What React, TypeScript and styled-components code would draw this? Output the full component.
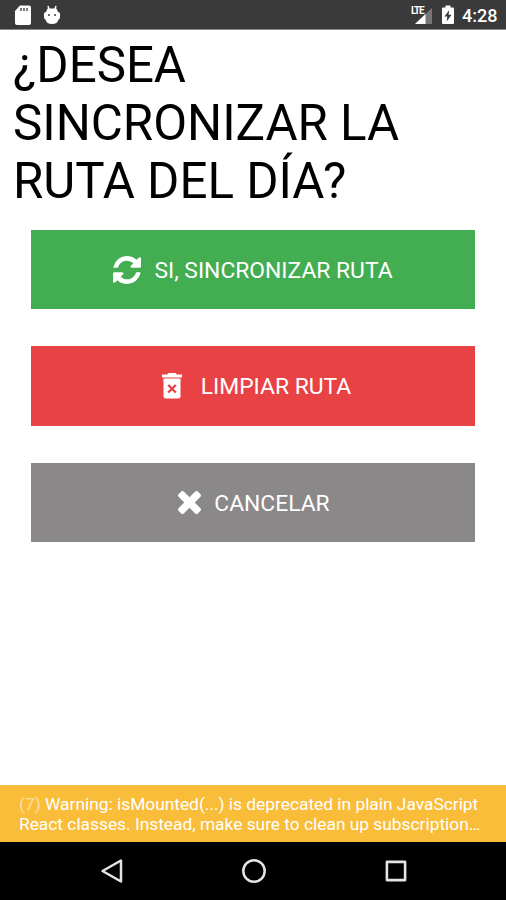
import React from "react";
import styled, { createGlobalStyle } from "styled-components";

const GlobalStyle = createGlobalStyle`
  * { box-sizing: border-box; }
  body { margin: 0; background: #fff; font-family: Roboto, "Liberation Sans", sans-serif; }
`;

const Screen = styled.div`
  display: flex;
  flex-direction: column;
  width: 506px;
  height: 900px;
  overflow: hidden;
  background: #fff;
`;

const StatusBar = styled.header`
  display: flex;
  align-items: center;
  height: 30px;
  padding: 0 9px 0 14px;
  background: #3a3a3a;
  border-bottom: 1px solid #8a8a8a;
  color: #fff;
`;

const StatusGroup = styled.div<{ $end?: boolean }>`
  display: flex;
  align-items: center;
  gap: ${(p) => (p.$end ? 9 : 11)}px;
  margin-left: ${(p) => (p.$end ? "auto" : "0")};
`;

const Clock = styled.time`
  width: 35px;
  margin-left: -1px;
  padding-top: 3px;
  font-size: 18px;
  line-height: 24px;
  font-weight: 500;
  white-space: nowrap;
`;

const Icon = styled.svg`
  display: block;
  flex: none;
`;

const Content = styled.main`
  flex: 1;
`;

const Title = styled.h1`
  margin: 0;
  padding: 7.4px 13px 0;
  font-size: 49.25px;
  line-height: 57.7px;
  font-weight: 400;
  color: #000;
  white-space: nowrap;
`;

const Actions = styled.div`
  display: flex;
  flex-direction: column;
  gap: 37px;
  padding: 19px 31px 0;
`;

const ActionButton = styled.button<{ $color: string; $gap: number; $shift: number }>`
  display: flex;
  align-items: center;
  justify-content: center;
  gap: ${(p) => p.$gap}px;
  height: 79.5px;
  padding: 1px 0 0 ${(p) => p.$shift}px;
  border: 0;
  background: ${(p) => p.$color};
  color: #fff;
  font-family: inherit;
  font-size: 22.85px;
  line-height: 28px;
  white-space: nowrap;
`;

const ButtonLabel = styled.span`
  padding-top: 2px;
`;

const Warning = styled.div`
  height: 57px;
  padding: 10px 19px 0;
  background: #fabd3a;
  color: #fff;
  font-size: 17.33px;
  line-height: 19.5px;
  white-space: nowrap;
`;

const Count = styled.span`
  opacity: 0.5;
`;

const NavBar = styled.nav`
  display: grid;
  grid-template-columns: 142px 142px 142px;
  justify-content: center;
  align-items: center;
  justify-items: center;
  height: 58px;
  padding-left: 1px;
  background: #000;
`;

const SdCard = () => (
  <Icon width="18" height="20" viewBox="0 0 18 20" fill="#fff">
    <path d="M6 0.5H15Q17 0.5 17 2.5V18Q17 20 15 20H3Q1 20 1 18V6Z" />
    <path d="M7 3V6M10 3V6M13 3V6" stroke="#3a3a3a" strokeWidth="1.3" />
  </Icon>
);

const Robot = () => (
  <Icon width="18" height="20" viewBox="0 0 18 20" fill="#fff">
    <path d="M5 1L6 4M13 1L12 4" stroke="#fff" strokeWidth="1.5" />
    <path d="M4.5 3.5H13.5L15 7Q17 7 17 9V12Q17 14 15.5 14.5Q14.5 19 9 19Q3.5 19 2.5 14.5Q1 14 1 12V9Q1 7 3 7Z" />
    <circle cx="6" cy="10" r="1" fill="#3a3a3a" />
    <circle cx="12" cy="10" r="1" fill="#3a3a3a" />
  </Icon>
);

const SignalBox = styled.div`
  position: relative;
  width: 22px;
  height: 18px;
`;

const NetworkLabel = styled.span`
  position: absolute;
  left: 0;
  top: 0;
  font-size: 10px;
  line-height: 10px;
  font-weight: 700;
  letter-spacing: -1.2px;
`;

const Signal = () => (
  <SignalBox>
    <Icon width="22" height="18" viewBox="0 0 22 18">
      <path d="M4 18L21 2V18Z" fill="#777" />
      <path d="M4 18L14.5 8V18Z" fill="#fff" />
    </Icon>
    <NetworkLabel>LTE</NetworkLabel>
  </SignalBox>
);

const Battery = () => (
  <Icon width="12" height="19" viewBox="0 0 12 19">
    <path d="M3.5 0.5H8.5V2.5H11Q12 2.5 12 3.5V18Q12 19 11 19H1Q0 19 0 18V3.5Q0 2.5 1 2.5H3.5Z" fill="#fff" />
    <path d="M7.2 5L2.5 11.5H5.3L4.7 16.5L9.5 9.7H6.6Z" fill="#3a3a3a" />
  </Icon>
);

const Refresh = () => (
  <Icon width="28" height="28" viewBox="0 0 1536 1536" fill="#fff">
    <path d="M1511 928q0 5-1 7-64 268-268 434.5t-478 166.5q-146 0-282.5-55t-243.5-157l-129 129q-19 19-45 19t-45-19-19-45v-448q0-26 19-45t45-19h448q26 0 45 19t19 45-19 45l-137 137q71 66 161 102t187 36q134 0 250-65t186-179q11-17 53-117 8-23 30-23h192q13 0 22.5 9.5t9.5 22.5zm25-800v448q0 26-19 45t-45 19h-448q-26 0-45-19t-19-45 19-45l138-138q-148-137-349-137-134 0-250 65t-186 179q-11 17-53 117-8 23-30 23h-199q-13 0-22.5-9.5t-9.5-22.5v-7q65-268 270-434.5t480-166.5q146 0 284 55.5t245 156.5l130-129q19-19 45-19t45 19 19 45z" />
  </Icon>
);

const Trash = () => (
  <Icon width="20" height="26" viewBox="0 0 20 26">
    <path d="M0 1.5H5L6.5 0H13.5L15 1.5H20V4.5H0Z" fill="#fff" />
    <path d="M1.5 5.5H18.5V23Q18.5 25.5 16 25.5H4Q1.5 25.5 1.5 23Z" fill="#fff" />
    <path d="M6.2 12L13.8 19.5M13.8 12L6.2 19.5" stroke="#e84245" strokeWidth="2.4" />
  </Icon>
);

const Cross = () => (
  <Icon width="23" height="23" viewBox="110 366 1188 1188" fill="#fff">
    <path d="M1298 1322q0 40-28 68l-136 136q-28 28-68 28t-68-28l-294-294-294 294q-28 28-68 28t-68-28l-136-136q-28-28-28-68t28-68l294-294-294-294q-28-28-28-68t28-68l136-136q28-28 68-28t68 28l294 294 294-294q28-28 68-28t68 28l136 136q28 28 28 68t-28 68l-294 294 294 294q28 28 28 68z" />
  </Icon>
);

export default function App() {
  return (
    <>
      <GlobalStyle />
      <Screen>
        <StatusBar>
          <StatusGroup>
            <SdCard />
            <Robot />
          </StatusGroup>
          <StatusGroup $end>
            <Signal />
            <Battery />
            <Clock>4:28</Clock>
          </StatusGroup>
        </StatusBar>
        <Content>
          <Title>
            ¿DESEA
            <br />
            SINCRONIZAR LA
            <br />
            RUTA DEL DÍA?
          </Title>
          <Actions>
            <ActionButton $color="#43ad51" $gap={13} $shift={0}>
              <Refresh />
              <ButtonLabel>SI, SINCRONIZAR RUTA</ButtonLabel>
            </ActionButton>
            <ActionButton $color="#e84245" $gap={19} $shift={7}>
              <Trash />
              <ButtonLabel>LIMPIAR RUTA</ButtonLabel>
            </ActionButton>
            <ActionButton $color="#8b8889" $gap={13} $shift={2}>
              <Cross />
              <ButtonLabel>CANCELAR</ButtonLabel>
            </ActionButton>
          </Actions>
        </Content>
        <Warning>
          <Count>(7)</Count> Warning: isMounted(...) is deprecated in plain JavaScript
          <br />
          React classes. Instead, make sure to clean up subscription…
        </Warning>
        <NavBar>
          <Icon width="24" height="26" viewBox="0 0 24 26" fill="none" stroke="#e4e4e4" strokeWidth="2.5" strokeLinejoin="round">
            <path d="M2.5 13L21 2.5V23.5Z" />
          </Icon>
          <Icon width="26" height="26" viewBox="0 0 26 26" fill="none" stroke="#e4e4e4" strokeWidth="2.5">
            <circle cx="13" cy="13" r="10.7" />
          </Icon>
          <Icon width="22" height="22" viewBox="0 0 22 22" fill="none" stroke="#e4e4e4" strokeWidth="2.6" strokeLinejoin="round">
            <rect x="1.9" y="1.9" width="18.2" height="18.2" />
          </Icon>
        </NavBar>
      </Screen>
    </>
  );
}
